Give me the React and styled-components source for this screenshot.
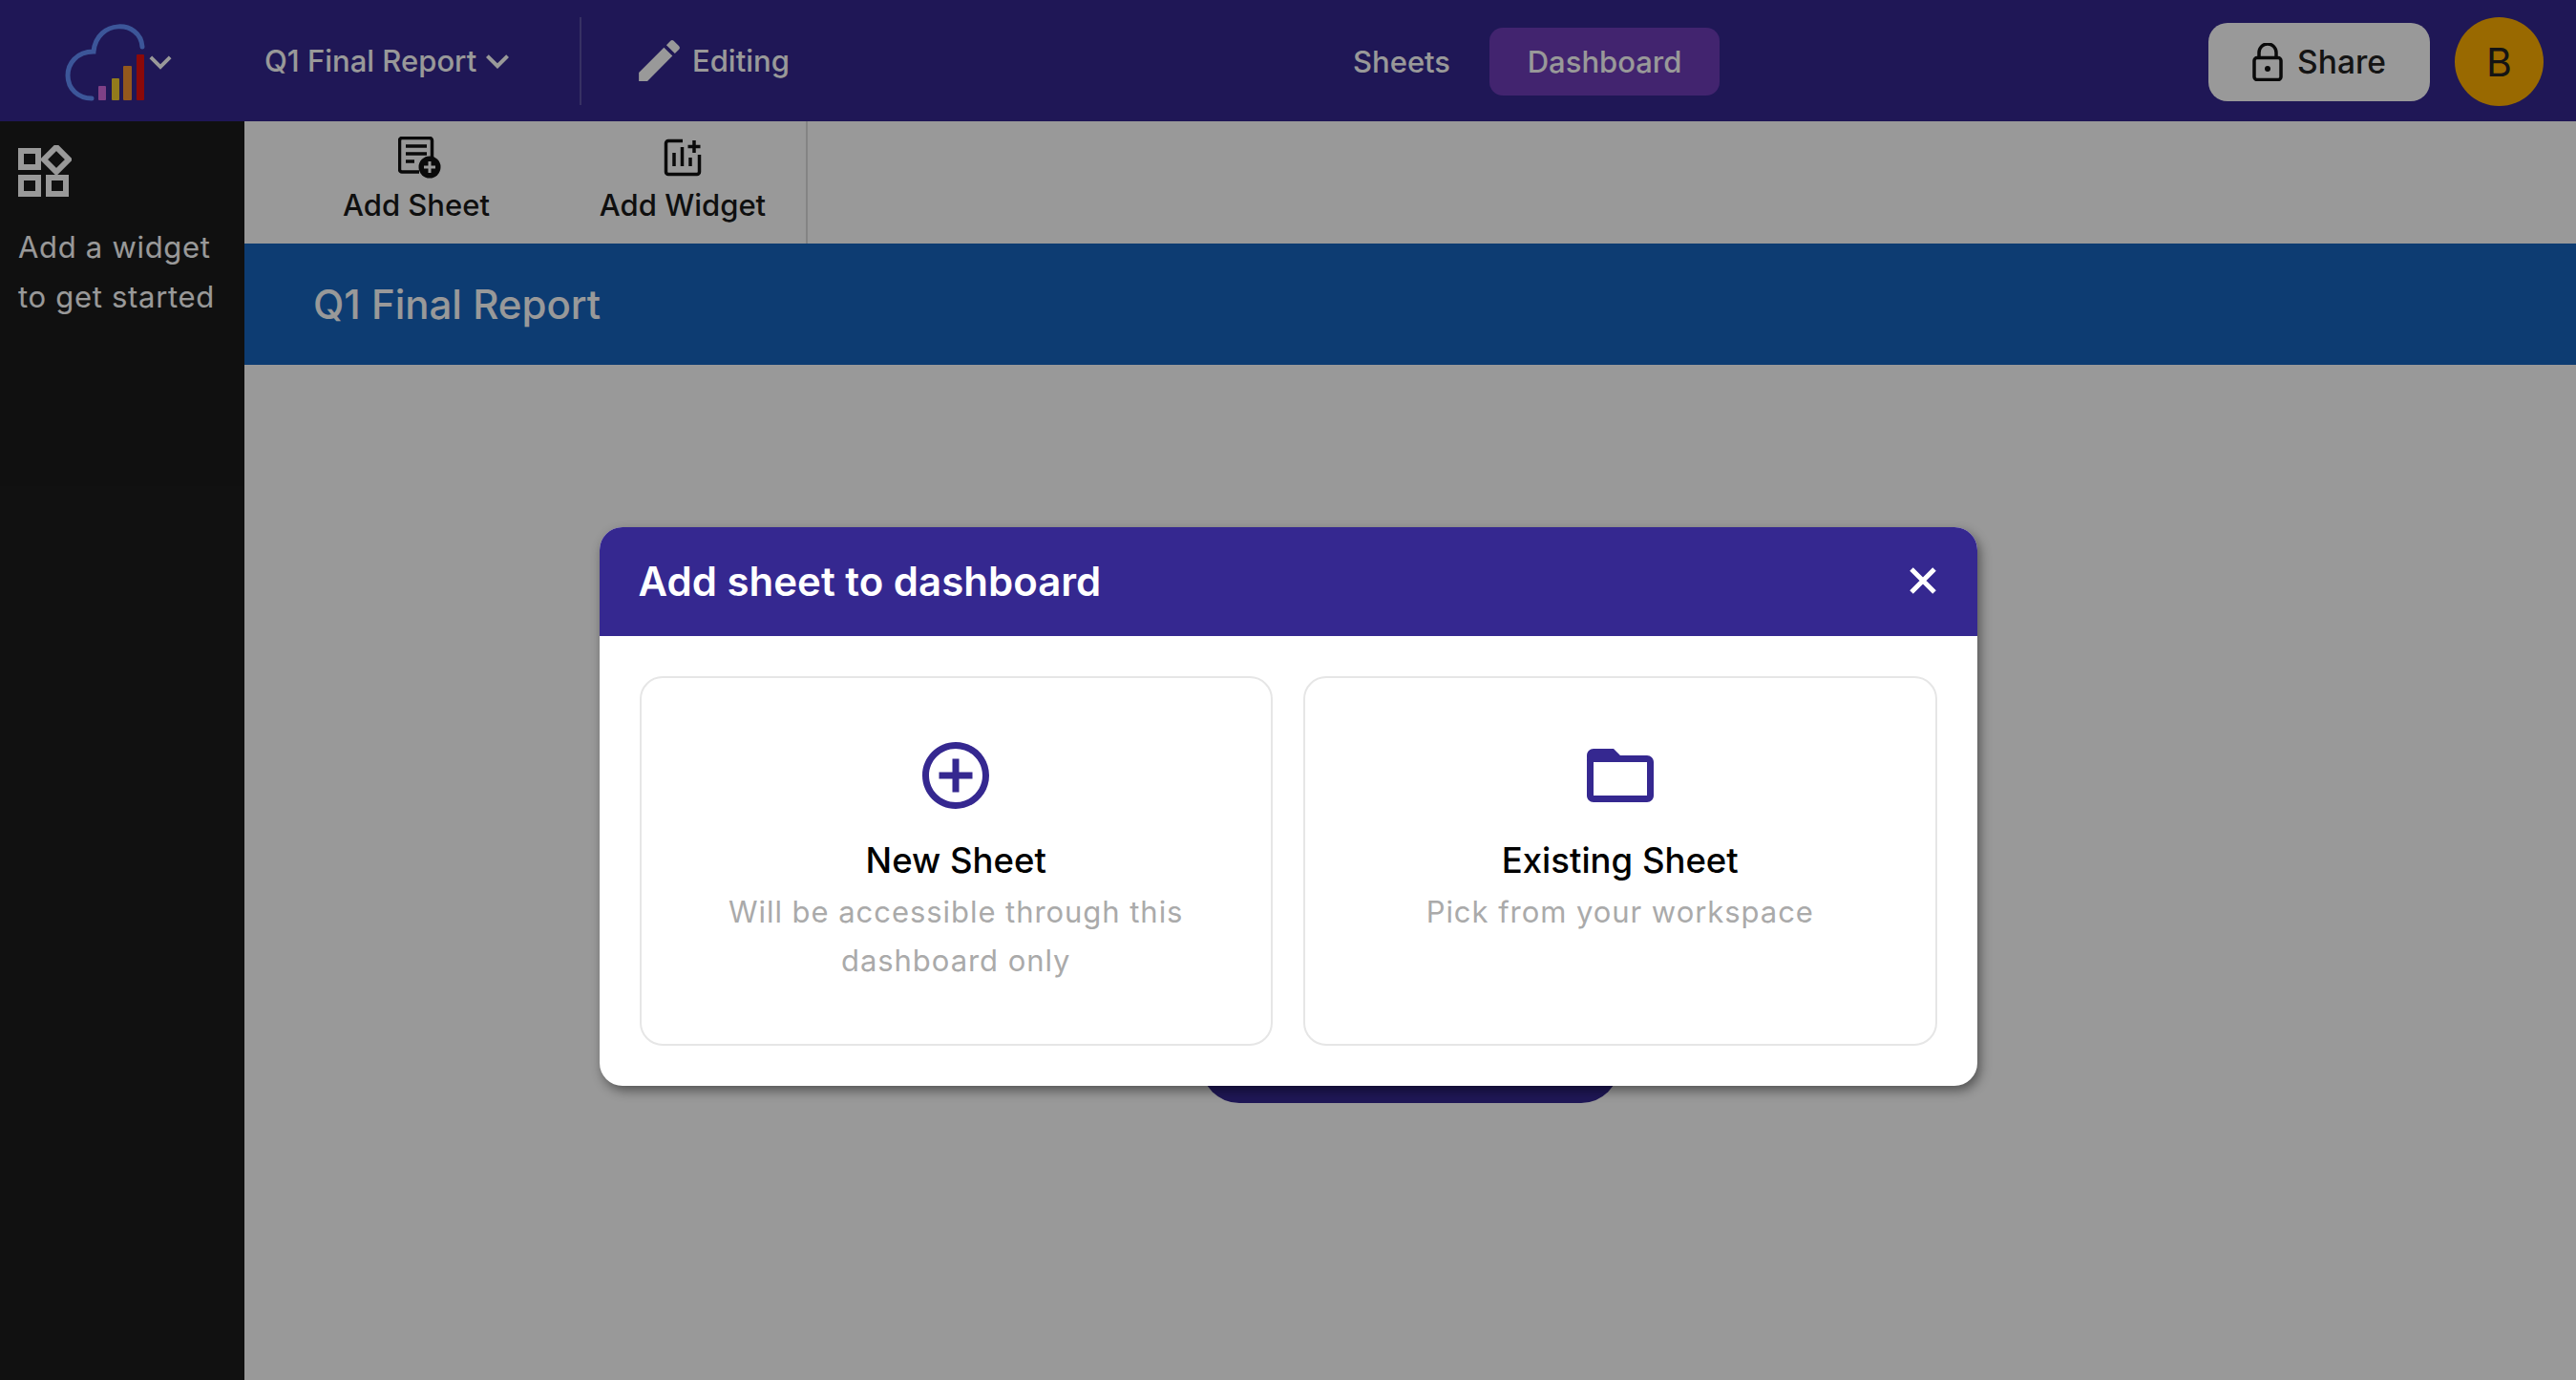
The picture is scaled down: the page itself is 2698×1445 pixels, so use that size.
import React from "react";
import styled, { createGlobalStyle } from "styled-components";
import { MdEdit, MdFolderOpen, MdAddCircleOutline, MdKeyboardArrowDown } from "react-icons/md";

const Global = createGlobalStyle`
  html, body { margin: 0; padding: 0; height: 100%; overflow: hidden; }
  body { font-family: Inter, "Liberation Sans", sans-serif; background: #fff; }
  #root { height: 100%; }
  * { box-sizing: border-box; }
`;

const Page = styled.div`
  position: relative;
  height: 100vh;
  display: flex;
  flex-direction: column;
`;

const Header = styled.header`
  height: 127px;
  flex: none;
  display: flex;
  align-items: center;
  background: #34278f;
  color: #fff;
  padding: 0 34px 0 68px;
`;

const LogoWrap = styled.div`
  display: flex;
  align-items: center;
  width: 209px;
  flex: none;
  color: #fff;
  svg.logo { flex: none; margin-top: 3px; }
  svg.chev { flex: none; margin: 3px 0 0 -7px; }
`;

const DocMenu = styled.div`
  display: flex;
  align-items: center;
  width: 330px;
  flex: none;
  font-size: 31px;
  font-weight: 450;
  svg { flex: none; margin-left: -2px; }
`;

const Divider = styled.div`
  width: 2px;
  height: 92px;
  flex: none;
  background: rgba(255, 255, 255, 0.2);
`;

const EditState = styled.div`
  display: flex;
  align-items: center;
  gap: 6px;
  margin-left: 56px;
  font-size: 31px;
  font-weight: 450;
  width: 752px;
  flex: none;
  svg { flex: none; margin-left: -3px; }
`;

const Tabs = styled.nav`
  display: flex;
  align-items: center;
  gap: 41px;
  margin-top: 2px;
`;

const Tab = styled.div`
  display: flex;
  align-items: center;
  justify-content: center;
  height: 71px;
  width: ${(p) => (p.$active ? "241px" : "auto")};
  border-radius: 14px;
  font-size: 31px;
  font-weight: 450;
  background: ${(p) => (p.$active ? "#6e3cb9" : "transparent")};
`;

const HeaderRight = styled.div`
  margin-left: auto;
  margin-top: 2px;
  display: flex;
  align-items: center;
  gap: 26px;
`;

const ShareButton = styled.button`
  display: flex;
  align-items: center;
  justify-content: center;
  gap: 15px;
  width: 232px;
  height: 82px;
  border: 0;
  border-radius: 20px;
  background: #fff;
  color: #222;
  font-family: inherit;
  font-size: 33.500px;
  font-weight: 450;
`;

const Avatar = styled.div`
  width: 93px;
  height: 93px;
  border-radius: 50%;
  background: #ffb000;
  color: #222;
  display: flex;
  align-items: center;
  justify-content: center;
  font-size: 41px;
`;

const Body = styled.div`
  flex: 1;
  display: flex;
  min-height: 0;
`;

const Sidebar = styled.aside`
  width: 256px;
  flex: none;
  background: #1c1c1c;
  color: #fff;
  padding: 25px 0 0 19px;
  display: flex;
  flex-direction: column;
`;

const SideText = styled.p`
  margin: 25px 0 0;
  font-size: 31px;
  line-height: 52px;
  letter-spacing: 0.7px;
  white-space: nowrap;
`;

const Main = styled.main`
  flex: 1;
  display: flex;
  flex-direction: column;
  min-width: 0;
`;

const Toolbar = styled.div`
  height: 128px;
  flex: none;
  display: flex;
  background: #fff;
`;

const ToolGroup = styled.div`
  width: 590px;
  display: flex;
  border-right: 2px solid #dcdcdc;
`;

const Tool = styled.button`
  border: 0;
  background: none;
  padding: 16px 0 0;
  width: ${(p) => p.$w}px;
  display: flex;
  flex-direction: column;
  align-items: center;
  font-family: inherit;
  font-size: 31px;
  font-weight: 450;
  color: #1a1a1a;
  svg { height: 44px; margin-bottom: 9px; flex: none; margin-left: ${(p) => p.$shift}px; }
`;

const Banner = styled.div`
  height: 127px;
  flex: none;
  background: #1765bf;
  color: #fff;
  display: flex;
  align-items: center;
  padding-left: 72px;
  font-size: 42px;
  font-weight: 550;
`;

const Canvas = styled.div`
  flex: 1;
  background: #fff;
  display: flex;
  flex-direction: column;
  align-items: center;
  padding-top: 693px;
`;

const EmptyButton = styled.button`
  width: 438px;
  height: 80px;
  border: 0;
  border-radius: 40px;
  background: #34278f;
  color: #fff;
  font-family: inherit;
  font-size: 30px;
`;

const Overlay = styled.div`
  position: absolute;
  inset: 0;
  background: rgba(0, 0, 0, 0.4);
  display: flex;
  justify-content: center;
  align-items: flex-start;
  padding-top: 552px;
`;

const Modal = styled.div`
  width: 1443px;
  height: 585px;
  border-radius: 24px;
  background: #fff;
  overflow: hidden;
  box-shadow: 3px 5px 12px rgba(0, 0, 0, 0.45);
`;

const ModalHeader = styled.div`
  height: 114px;
  background: #352890;
  color: #fff;
  display: flex;
  align-items: center;
  justify-content: space-between;
  padding: 0 42px 2px 41px;
`;

const ModalTitle = styled.h2`
  margin: 0;
  font-size: 42px;
  font-weight: 600;
`;

const CloseBtn = styled.span`
  display: flex;
`;

const Cards = styled.div`
  display: grid;
  grid-template-columns: 1fr 1fr;
  gap: 32px;
  padding: 42px;
`;

const Card = styled.div`
  height: 387px;
  border: 2px solid #e6e6e6;
  border-radius: 24px;
  display: flex;
  flex-direction: column;
  align-items: center;
  padding-top: 60px;
  text-align: center;
  color: #352890;
`;

const CardTitle = styled.div`
  margin-top: 22px;
  color: #000;
  font-size: 36.500px;
  font-weight: 500;
  line-height: 50px;
`;

const CardText = styled.div`
  margin-top: 3px;
  width: 560px;
  color: #aaa;
  font-size: 31px;
  line-height: 51px;
  letter-spacing: 0.95px;
`;

const Logo = () => (
  <svg className="logo" width="84" height="84" viewBox="0 0 84 84" fill="none">
    <path d="M81 26C79 -3 33 -3 30 31C12 31 3 44 3 56C3 70 14 80 28 80" stroke="#6490ff" strokeWidth="5" strokeLinecap="round" />
    <rect x="35" y="67" width="8" height="15" rx="1" fill="#d46be0" />
    <rect x="49" y="59" width="8" height="23" rx="1" fill="#f4ce30" />
    <rect x="61" y="46" width="9" height="36" rx="1" fill="#f59331" />
    <rect x="75" y="34" width="8" height="48" rx="1" fill="#e81010" />
  </svg>
);

const SheetIcon = () => (
  <svg width="46" height="44" viewBox="0 0 46 44" fill="none">
    <path d="M22 37H4a2.500 2.500 0 0 1-2.500-2.500V4A2.500 2.500 0 0 1 4 1.500h29A2.500 2.500 0 0 1 35.500 4v18" stroke="#111" strokeWidth="3.500" />
    <path d="M8 10h22M8 18h22M8 26h9" stroke="#111" strokeWidth="3.500" />
    <circle cx="33" cy="32" r="11.500" fill="#111" />
    <path d="M33 26v12M27 32h12" stroke="#fff" strokeWidth="3" />
  </svg>
);

const WidgetIcon = () => (
  <svg width="40" height="40" viewBox="0 0 40 40" fill="none">
    <path d="M20 2.500H5A2.500 2.500 0 0 0 2.500 5v30A2.500 2.500 0 0 0 5 37.500h30a2.500 2.500 0 0 0 2.500-2.500V17" stroke="#111" strokeWidth="3.500" />
    <path d="M11 15v14M19.500 9v20M28 20v9" stroke="#111" strokeWidth="3.500" />
    <path d="M32 2v13M25.500 8.500h13" stroke="#111" strokeWidth="3.500" />
  </svg>
);

const GridIcon = () => (
  <svg width="56" height="56" viewBox="0 0 56 56" fill="none" stroke="#fff" strokeWidth="6">
    <rect x="3" y="6" width="18" height="17" />
    <path d="M40 2L53 15L40 28L27 15Z" />
    <rect x="3" y="34" width="18" height="17" />
    <rect x="32" y="34" width="18" height="17" />
  </svg>
);

const LockIcon = () => (
  <svg width="32" height="40" viewBox="0 0 32 40" fill="none" stroke="#111" strokeWidth="3.500">
    <rect x="2" y="15.500" width="28" height="23" rx="3" />
    <path d="M7 15.500V10a9 9 0 0 1 18 0v5.500" />
    <circle cx="16" cy="27" r="3" fill="#111" stroke="none" />
  </svg>
);

const CloseIcon = () => (
  <svg width="30" height="30" viewBox="0 0 30 30" fill="none" stroke="#fff" strokeWidth="5">
    <path d="M3 3L27 27M27 3L3 27" />
  </svg>
);

export default function App() {
  return (
    <Page>
      <Global />
      <Header>
        <LogoWrap>
          <Logo />
          <MdKeyboardArrowDown className="chev" size={46} />
        </LogoWrap>
        <DocMenu>
          Q1 Final Report
          <MdKeyboardArrowDown size={48} />
        </DocMenu>
        <Divider />
        <EditState>
          <MdEdit size={57} />
          Editing
        </EditState>
        <Tabs>
          <Tab>Sheets</Tab>
          <Tab $active>Dashboard</Tab>
        </Tabs>
        <HeaderRight>
          <ShareButton>
            <LockIcon />
            Share
          </ShareButton>
          <Avatar>B</Avatar>
        </HeaderRight>
      </Header>
      <Body>
        <Sidebar>
          <GridIcon />
          <SideText>
            Add a widget
            <br />
            to get started
          </SideText>
        </Sidebar>
        <Main>
          <Toolbar>
            <ToolGroup>
              <Tool $w={360} $shift={8}>
                <SheetIcon />
                Add Sheet
              </Tool>
              <Tool $w={198} $shift={0}>
                <WidgetIcon />
                Add Widget
              </Tool>
            </ToolGroup>
          </Toolbar>
          <Banner>Q1 Final Report</Banner>
          <Canvas>
            <EmptyButton>Add Sheet</EmptyButton>
          </Canvas>
        </Main>
      </Body>
      <Overlay>
        <Modal>
          <ModalHeader>
            <ModalTitle>Add sheet to dashboard</ModalTitle>
            <CloseBtn>
              <CloseIcon />
            </CloseBtn>
          </ModalHeader>
          <Cards>
            <Card>
              <MdAddCircleOutline size={84} />
              <CardTitle>New Sheet</CardTitle>
              <CardText>Will be accessible through this dashboard only</CardText>
            </Card>
            <Card>
              <MdFolderOpen size={84} />
              <CardTitle>Existing Sheet</CardTitle>
              <CardText>Pick from your workspace</CardText>
            </Card>
          </Cards>
        </Modal>
      </Overlay>
    </Page>
  );
}
